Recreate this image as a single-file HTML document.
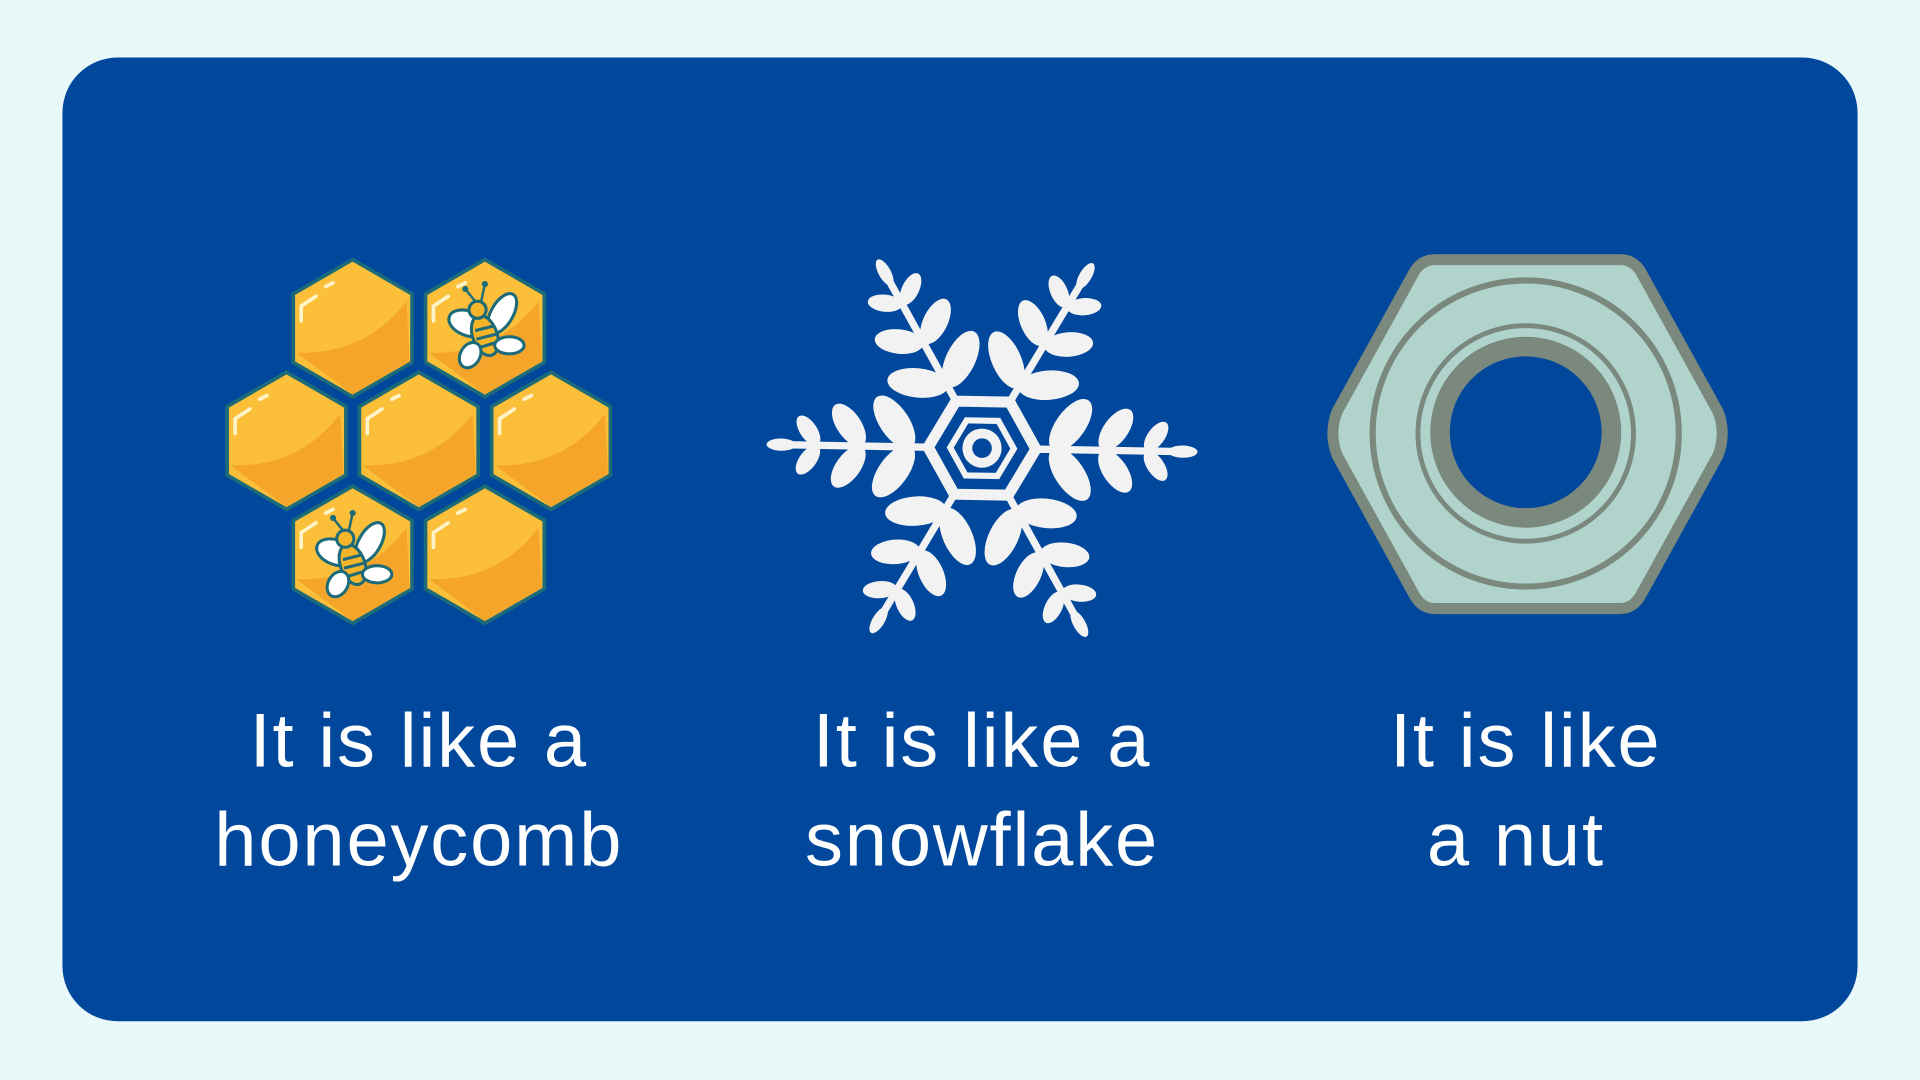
<!DOCTYPE html>
<html><head><meta charset="utf-8"><style>
html,body{margin:0;padding:0;background:#e9f9f9;}
svg{display:block}
</style></head><body>
<svg width="1920" height="1080" viewBox="0 0 1568 882" xmlns="http://www.w3.org/2000/svg">
<defs>
<g id="hx">
<polygon points="0,-56 48.5,-28 48.5,28 0,56 -48.5,28 -48.5,-28" fill="#fbbf3a" stroke="#1d6a78" stroke-width="3"/>
<path d="M-46,20 Q10,22 44,-22 L46.5,27 L0,54 Z" fill="#f5a62a"/>
<path d="M-42,-6 L-42,-18 L-30,-26" stroke="#fff3c8" stroke-width="3" fill="none" stroke-linecap="round"/>
<path d="M-22,-34 L-16,-37" stroke="#fff3c8" stroke-width="3" stroke-linecap="round"/>
</g>
<g id="bee">
<ellipse cx="-14" cy="-4" rx="16" ry="10" fill="#fff" stroke="#1d6a78" stroke-width="2.5" transform="rotate(20 -14 -4)"/>
<ellipse cx="14" cy="-12" rx="9" ry="18" fill="#fff" stroke="#1d6a78" stroke-width="2.5" transform="rotate(30 14 -12)"/>
<ellipse cx="0" cy="6" rx="10" ry="17" fill="#f5b52a" stroke="#1d6a78" stroke-width="2.5" transform="rotate(-20 0 6)"/>
<path d="M-8,2 L8,-2 M-7,9 L9,5 M-5,16 L8,12" stroke="#1d6a78" stroke-width="2.5"/>
<circle cx="-6" cy="-15" r="7" fill="#f5b52a" stroke="#1d6a78" stroke-width="2.5"/>
<path d="M-8,-22 L-16,-32 M-3,-22 L0,-36" stroke="#1d6a78" stroke-width="2"/>
<circle cx="-16" cy="-32" r="2.5" fill="#1d6a78"/><circle cx="0" cy="-36" r="2.5" fill="#1d6a78"/>
<ellipse cx="-12" cy="22" rx="8" ry="11" fill="#fff" stroke="#1d6a78" stroke-width="2.5" transform="rotate(30 -12 22)"/>
<ellipse cx="20" cy="14" rx="12" ry="7" fill="#fff" stroke="#1d6a78" stroke-width="2.5"/>
</g>
<g id="arm" fill="#f2f2f2">
<rect x="40" y="-3" width="132" height="6"/>
<ellipse cx="164" cy="0" rx="12" ry="5"/>
<g transform="translate(56,0)">
<ellipse cx="16" cy="-20" rx="12" ry="25" transform="rotate(35 16 -20)"/>
<ellipse cx="16" cy="20" rx="12" ry="25" transform="rotate(-35 16 20)"/>
</g>
<g transform="translate(96,0)">
<ellipse cx="13" cy="-17" rx="10" ry="20" transform="rotate(35 13 -17)"/>
<ellipse cx="13" cy="17" rx="10" ry="20" transform="rotate(-35 13 17)"/>
</g>
<g transform="translate(132,0)">
<ellipse cx="10" cy="-12" rx="7" ry="14" transform="rotate(35 10 -12)"/>
<ellipse cx="10" cy="12" rx="7" ry="14" transform="rotate(-35 10 12)"/>
</g>
</g>
</defs>
<rect x="51" y="47" width="1466" height="787" rx="45" fill="#01489d"/>

<use href="#hx" x="288" y="268"/>
<use href="#hx" x="396" y="268"/>
<use href="#hx" x="234" y="360"/>
<use href="#hx" x="342" y="360"/>
<use href="#hx" x="450" y="360"/>
<use href="#hx" x="288" y="453"/>
<use href="#hx" x="396" y="453"/>
<use href="#bee" x="396" y="268"/>
<use href="#bee" x="288" y="455"/>

<g transform="translate(802,366) rotate(1)">
<use href="#arm"/>
<use href="#arm" transform="rotate(60)"/>
<use href="#arm" transform="rotate(120)"/>
<use href="#arm" transform="rotate(180)"/>
<use href="#arm" transform="rotate(240)"/>
<use href="#arm" transform="rotate(300)"/>
<polygon points="44,0 22,38 -22,38 -44,0 -22,-38 22,-38" fill="none" stroke="#f2f2f2" stroke-width="9"/>
<polygon points="26,0 13,22.5 -13,22.5 -26,0 -13,-22.5 13,-22.5" fill="none" stroke="#f2f2f2" stroke-width="5"/>
<circle r="16" fill="#f2f2f2"/><circle r="8" fill="#01489d"/>
</g>

<path d="M1172,212 L1323,212 Q1334,212 1340,222 L1403,336 Q1410,354 1403,372 L1340,486 Q1334,497 1323,497 L1172,497 Q1161,497 1155,486 L1092,372 Q1085,354 1092,336 L1155,222 Q1161,212 1172,212 Z" fill="#b0d4cc" stroke="#7a887e" stroke-width="9"/>
<circle cx="1246" cy="354" r="125" fill="none" stroke="#7a887e" stroke-width="5"/>
<circle cx="1246" cy="354" r="88" fill="none" stroke="#7a887e" stroke-width="4"/>
<circle cx="1246" cy="353" r="70" fill="#01489d" stroke="#7a887e" stroke-width="16"/>

<g font-family="'Liberation Sans', sans-serif" font-size="62" fill="#fff" text-anchor="middle" letter-spacing="1.5">
<text x="342" y="626">It is like a</text>
<text x="342" y="707">honeycomb</text>
<text x="802" y="626">It is like a</text>
<text x="802" y="707">snowflake</text>
<text x="1246" y="626">It is like</text>
<text x="1238" y="707">a nut</text>
</g>
</svg>
</body></html>
